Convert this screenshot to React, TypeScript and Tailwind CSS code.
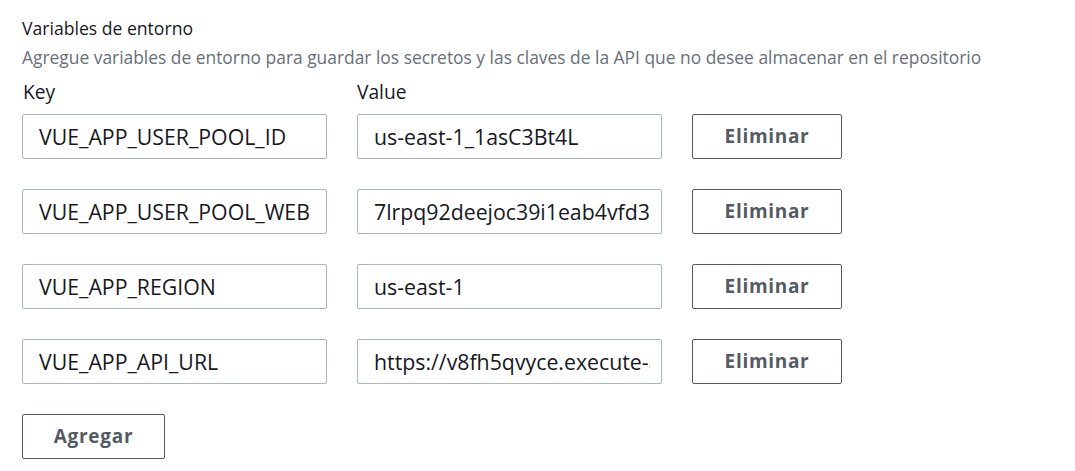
import { useState } from "react";

type EnvVar = { key: string; value: string };

const initialVars: EnvVar[] = [
  { key: "VUE_APP_USER_POOL_ID", value: "us-east-1_1asC3Bt4L" },
  { key: "VUE_APP_USER_POOL_WEB", value: "7lrpq92deejoc39i1eab4vfd3k" },
  { key: "VUE_APP_REGION", value: "us-east-1" },
  { key: "VUE_APP_API_URL", value: "https://v8fh5qvyce.execute-api.us-east-1.amazonaws.com/dev" },
];

const inputCls =
  "h-[45px] w-[305px] rounded-[2px] border border-[#aab7b8] bg-white pl-[16px] pr-[11px] text-[21.3px] text-[#16191f] outline-none";

const btnCls =
  "h-[45px] rounded-[2px] border border-[#545b64] bg-white text-[19px] font-bold tracking-[0.7px] text-[#545b64]";

export default function App() {
  const [vars, setVars] = useState(initialVars);

  return (
    <div className="min-h-screen bg-white px-[22px] pt-[16px] font-['Open_Sans',sans-serif]">
      <h2 className="text-[17.6px] leading-[24px] text-[#16191f]">Variables de entorno</h2>
      <p className="mt-[6px] text-[17.4px] leading-[22px] text-[#687078]">
        Agregue variables de entorno para guardar los secretos y las claves de la API que no desee
        almacenar en el repositorio
      </p>
      <div className="mt-[11px] flex gap-[30px] text-[19.2px] leading-[26px] text-[#16191f]">
        <span className="w-[305px] pl-[1px]">Key</span>
        <span>Value</span>
      </div>

      <div className="mt-[9px] flex flex-col gap-[30px]">
        {vars.map((v, i) => (
          <div key={i} className="flex items-center">
            <input readOnly value={v.key} className={inputCls} />
            <input readOnly value={v.value} className={`${inputCls} ml-[30px]`} />
            <button
              onClick={() => setVars(vars.filter((_, j) => j !== i))}
              className={`${btnCls} ml-[30px] w-[150px]`}
            >
              Eliminar
            </button>
          </div>
        ))}
      </div>

      <button
        onClick={() => setVars([...vars, { key: "", value: "" }])}
        className={`${btnCls} mt-[30px] w-[143px]`}
      >
        Agregar
      </button>
    </div>
  );
}
